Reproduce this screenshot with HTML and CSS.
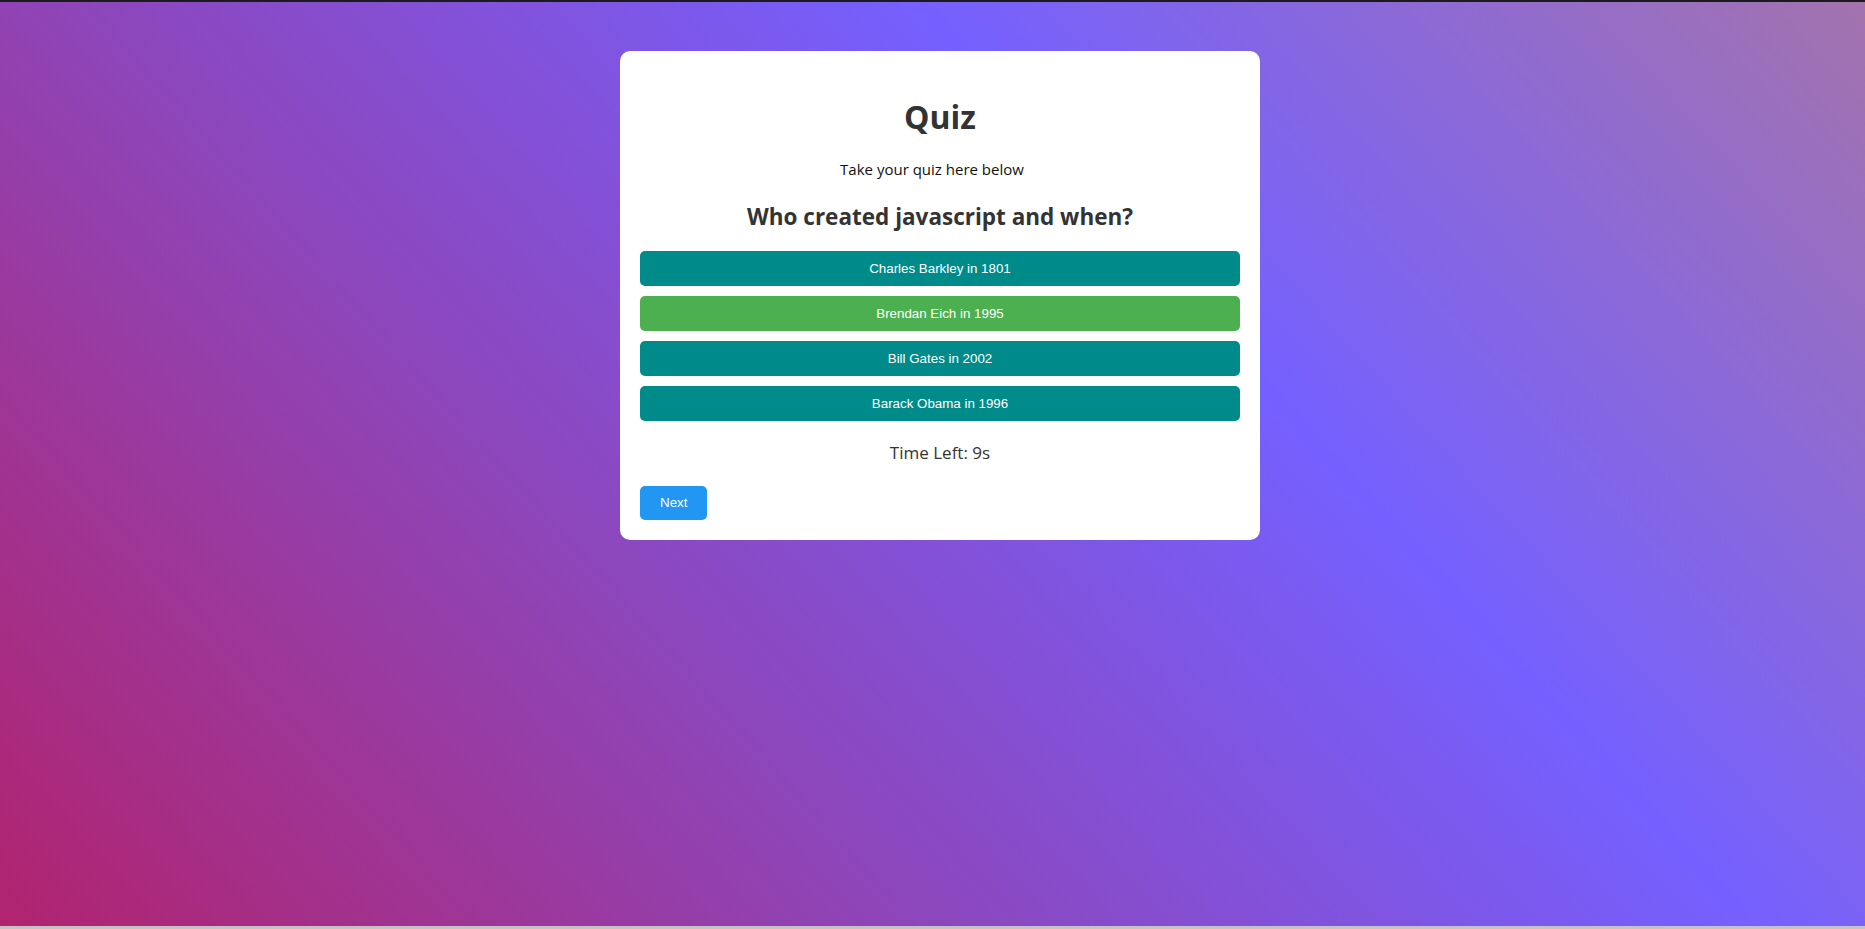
FILE: index.html
```html
<!DOCTYPE html>
<html lang="en">
<head>
<meta charset="UTF-8">
<title>Quiz</title>
<link rel="stylesheet" href="styles.css">
</head>
<body>
<div class="page">
  <main class="card">
    <h1 class="title">Quiz</h1>
    <p class="subtitle">Take your quiz here below</p>
    <h2 class="question">Who created javascript and when?</h2>
    <div class="options">
      <button class="option">Charles Barkley in 1801</button>
      <button class="option correct">Brendan Eich in 1995</button>
      <button class="option">Bill Gates in 2002</button>
      <button class="option">Barack Obama in 1996</button>
    </div>
    <p class="timer">Time Left: 9s</p>
    <div class="actions">
      <button class="next">Next</button>
    </div>
  </main>
</div>
<div class="bottom-bar"></div>
</body>
</html>
```

FILE: styles.css
```css
html, body {
  margin: 0;
  padding: 0;
  height: 100%;
}

body {
  display: flex;
  flex-direction: column;
  border-top: 2px solid #1c1a20;
  box-sizing: border-box;
  background: linear-gradient(48deg, #b1236e 0%, #8e45b8 33%, #7560ff 65%, #a373ad 100%);
  font-family: "Open Sans", "Noto Sans", sans-serif;
  overflow: hidden;
}

.page {
  flex: 1;
  display: flex;
  justify-content: center;
  align-items: flex-start;
  padding: 49px 0 0 15px;
}

.card {
  width: 600px;
  padding: 20px;
  background: #ffffff;
  border-radius: 10px;
  text-align: center;
}

.title {
  margin: 24.5px 0 21px;
  font-size: 32px;
  font-weight: 700;
  color: #333333;
  line-height: 42px;
}

.subtitle {
  margin: 0 0 21.5px;
  padding-right: 16px;
  font-size: 15px;
  color: #111111;
  line-height: 21px;
}

.question {
  margin: 0 0 18px;
  font-size: 22.5px;
  font-weight: 700;
  color: #333333;
  line-height: 32px;
}

.options {
  display: flex;
  flex-direction: column;
  gap: 10px;
}

.option {
  display: block;
  width: 100%;
  height: 35px;
  padding: 0 10px;
  border: none;
  border-radius: 5px;
  background: #008b8b;
  color: #ffffff;
  font-family: "Liberation Sans", Arial, sans-serif;
  font-size: 13.333px;
}

.option.correct {
  background: #4caf50;
}

.timer {
  margin: 20px 0 20.5px;
  font-size: 17px;
  line-height: 24px;
  color: #333333;
}

.actions {
  display: flex;
}

.next {
  height: 34px;
  padding: 0 20px;
  border: none;
  border-radius: 5px;
  background: #2196f3;
  color: #ffffff;
  font-family: "Liberation Sans", Arial, sans-serif;
  font-size: 13.333px;
}

.bottom-bar {
  height: 3px;
  background: #c3c3c3;
}
```
